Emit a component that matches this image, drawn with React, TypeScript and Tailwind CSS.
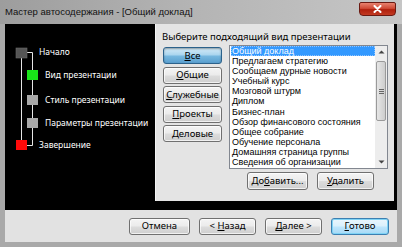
import React from "react";

const ui = { fontFamily: '"Noto Sans", "Liberation Sans", sans-serif' };
const listFont = { fontFamily: '"Liberation Sans", "Noto Sans", sans-serif' };

const btn =
  "flex items-center justify-center rounded-[3px] border border-[#707070] bg-[linear-gradient(#f4f4f4_0%,#ebebeb_48%,#dcdcdc_52%,#cfcfcf_100%)] text-[9.5px] leading-none text-black shadow-[inset_0_0_0_1px_rgba(255,255,255,0.7)]";

const items = [
  "Общий доклад",
  "Предлагаем стратегию",
  "Сообщаем дурные новости",
  "Учебный курс",
  "Мозговой штурм",
  "Диплом",
  "Бизнес-план",
  "Обзор финансового состояния",
  "Общее собрание",
  "Обучение персонала",
  "Домашняя страница группы",
  "Сведения об организации",
];

function Mn({ k, rest, pre }: { k: string; rest: string; pre?: string }) {
  return (
    <span>
      {pre}
      <span className="underline underline-offset-[1px]">{k}</span>
      {rest}
    </span>
  );
}

function Steps() {
  return (
    <div className="relative h-full w-[150px] shrink-0 bg-black">
      {/* step diagram */}
      <svg className="absolute left-0 top-0" width="150" height="177" viewBox="0 0 150 177">
        <g stroke="#e6e6e6" strokeWidth="1" fill="none">
          <path d="M22 28.5H27.5V121.5H22" />
          <path d="M16.5 34V116" />
        </g>
        <rect x="11" y="24" width="11" height="10" fill="#555" stroke="#6a6a6a" strokeWidth="0.6" />
        <rect x="22" y="46" width="11" height="10" fill="#18e418" />
        <rect x="22" y="71" width="11" height="10" fill="#a8a8a8" />
        <rect x="22" y="94" width="11" height="10" fill="#a8a8a8" />
        <rect x="11" y="116" width="11" height="10" fill="#ff0a0a" />
      </svg>
      <div className="relative flex flex-col pt-[22px] text-[8.5px] leading-[12px] text-white" style={ui}>
        <div className="h-[12px] pl-[34px]">Начало</div>
        <div className="mt-[11px] h-[12px] pl-[40px]">Вид презентации</div>
        <div className="mt-[13px] h-[12px] pl-[40px]">Стиль презентации</div>
        <div className="mt-[11px] h-[12px] pl-[40px]">Параметры презентации</div>
        <div className="mt-[10px] h-[12px] pl-[34px]">Завершение</div>
      </div>
    </div>
  );
}

function ListBox() {
  return (
    <div className="flex h-[124px] w-[159px] border border-[#828790] bg-white">
      <div className="flex flex-1 flex-col pl-[1px] text-[9px] text-black" style={listFont}>
        {items.map((t, i) => (
          <div
            key={t}
            className={
              i === 0
                ? "flex h-[10.2px] items-center overflow-hidden whitespace-nowrap bg-[#3399ff] pl-[1px] leading-[9px] text-white outline outline-1 outline-dotted outline-[#8fc4ff] -outline-offset-1"
                : "flex h-[10.2px] items-center overflow-hidden whitespace-nowrap pl-[1px] leading-[9px]"
            }
          >
            {t}
          </div>
        ))}
      </div>
      {/* scrollbar */}
      <div className="flex w-[12px] shrink-0 flex-col bg-[#ededed]">
        <div className="flex h-[12px] items-center justify-center">
          <svg width="7" height="4" viewBox="0 0 7 4">
            <path d="M0.5 3.5L3.5 0.5L6.5 3.5Z" fill="#444" />
          </svg>
        </div>
        <div className="mx-[1px] mt-[3px] flex h-[60px] items-center justify-center rounded-[2px] border border-[#9a9a9a] bg-[linear-gradient(90deg,#e6e6e6,#cdcdcd)]">
          <div className="flex flex-col gap-[1px]">
            <div className="h-px w-[5px] bg-[#666]" />
            <div className="h-px w-[5px] bg-[#666]" />
            <div className="h-px w-[5px] bg-[#666]" />
          </div>
        </div>
        <div className="flex-1" />
        <div className="flex h-[12px] items-center justify-center">
          <svg width="7" height="4" viewBox="0 0 7 4">
            <path d="M0.5 0.5L3.5 3.5L6.5 0.5Z" fill="#444" />
          </svg>
        </div>
      </div>
    </div>
  );
}

function RightPanel() {
  return (
    <div className="mr-[3px] flex flex-1 flex-col border-l border-[#f4f4f4] bg-[#e4e4e4] pl-[6px] pt-[7px]" style={ui}>
      <div className="h-[12px] text-[9.5px] leading-[12px] text-black">Выберите подходящий вид презентации</div>
      <div className="mt-[2px] flex items-start">
        <div className="ml-[1px] mt-[2px] flex w-[59px] flex-col gap-[2.5px]">
          <div className="flex h-[17px] items-center justify-center rounded-[3px] border border-[#2c628b] bg-[linear-gradient(#d6ecf8_0%,#a8d4ee_48%,#78b9e0_52%,#5a9fcf_100%)] text-[9.5px] leading-none text-black shadow-[inset_0_1px_2px_rgba(0,0,0,0.35)]">
            <Mn k="В" rest="се" />
          </div>
          <div className={`${btn} h-[17px]`}>
            <Mn k="О" rest="бщие" />
          </div>
          <div className={`${btn} h-[17px]`}>
            <Mn k="С" rest="лужебные" />
          </div>
          <div className={`${btn} h-[17px]`}>
            <Mn k="П" rest="роекты" />
          </div>
          <div className={`${btn} h-[17px]`}>
            <Mn k="Д" rest="еловые" />
          </div>
        </div>
        <div className="ml-[7px]">
          <ListBox />
        </div>
      </div>
      <div className="mt-[3px] flex gap-[9px] pl-[85px]">
        <div className={`${btn} h-[18px] w-[61px]`}>
          <Mn pre="До" k="б" rest="авить..." />
        </div>
        <div className={`${btn} h-[18px] w-[57px]`}>
          <Mn k="У" rest="далить" />
        </div>
      </div>
    </div>
  );
}

export default function App() {
  return (
    <div className="flex h-[247px] w-[402px] flex-col overflow-hidden bg-[#a9a9a9]">
      {/* title bar */}
      <div className="flex h-[24px] shrink-0 items-start justify-between bg-[linear-gradient(90deg,#9d9d9d_0%,#b3b3b3_45%,#c6c6c6_100%)] pl-[5px] pr-[6px]">
        <div
          className="mt-[5px] text-[9.5px] leading-[14px] text-[#111]"
          style={{ fontFamily: '"Liberation Sans", "Noto Sans", sans-serif' }}
        >
          Мастер автосодержания - [Общий доклад]
        </div>
        <div className="mt-[2px] flex h-[14px] w-[37px] items-center justify-center rounded-b-[4px] rounded-t-[2px] border border-[#6b1a12] bg-[linear-gradient(#e8826f_0%,#cf4a35_45%,#b0200d_55%,#c23a22_100%)]">
          <svg width="9" height="8" viewBox="0 0 9 8">
            <path d="M1.5 1L7.5 7M7.5 1L1.5 7" stroke="#fff" strokeWidth="2" strokeLinecap="round" />
          </svg>
        </div>
      </div>
      {/* client */}
      <div className="mx-[5px] mb-[5px] flex flex-1 flex-col bg-black">
        <div className="flex h-[177px]">
          <Steps />
          <RightPanel />
        </div>
        <div className="h-[9px]" />
        <div
          className="flex flex-1 items-center justify-end gap-[9px] bg-[#e2e2e2] pr-[8px]"
          style={ui}
        >
          <div className={`${btn} h-[17px] w-[61px]`}>Отмена</div>
          <div className={`${btn} h-[17px] w-[57px]`}>
            <Mn pre="< " k="Н" rest="азад" />
          </div>
          <div className={`${btn} h-[17px] w-[57px]`}>
            <Mn k="Д" rest="алее >" />
          </div>
          <div className="flex h-[17px] w-[58px] items-center justify-center rounded-[3px] border border-[#3c7fb1] bg-[linear-gradient(#eaf6fd_0%,#d9f0fc_48%,#bee6fd_52%,#a7d9f5_100%)] text-[9.5px] leading-none text-black shadow-[inset_0_0_0_1px_#7fd3f5]">
            <Mn k="Г" rest="отово" />
          </div>
        </div>
      </div>
    </div>
  );
}
